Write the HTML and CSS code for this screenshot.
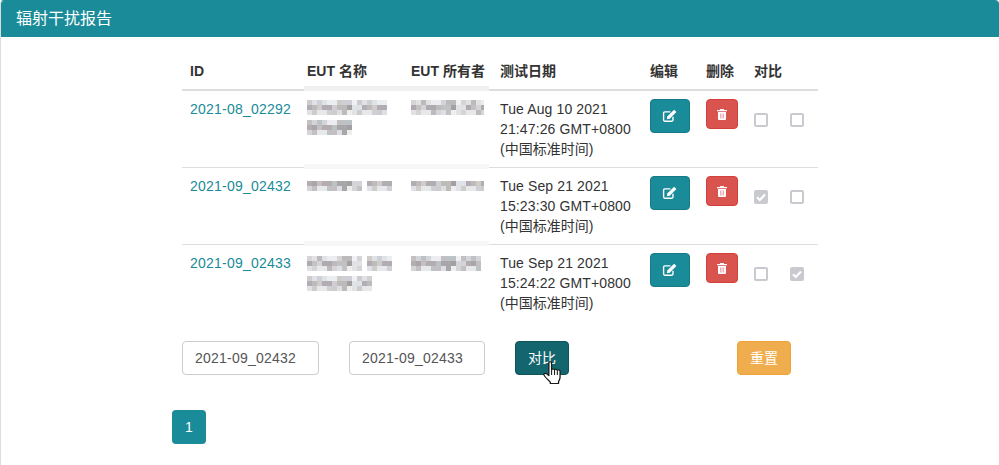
FILE: index.html
```html
<!DOCTYPE html>
<html lang="zh">
<head>
<meta charset="utf-8">
<title>辐射干扰报告</title>
<link rel="stylesheet" href="styles.css">
</head>
<body>
<section class="panel">
  <header class="panel-head">辐射干扰报告</header>
  <div class="panel-body">
    <table class="report">
      <colgroup>
        <col class="c-id"><col class="c-name"><col class="c-owner"><col class="c-date"><col class="c-edit"><col class="c-del"><col class="c-cmp">
      </colgroup>
      <thead>
        <tr><th>ID</th><th class="masked m-name">EUT 名称</th><th class="masked m-owner">EUT 所有者</th><th>测试日期</th><th>编辑</th><th>删除</th><th>对比</th></tr>
      </thead>
      <tbody>
        <tr>
          <td><a href="#">2021-08_02292</a></td>
          <td class="masked m-name"><div class="mosaic-line top-1"><div class="mosaic w80 p1"></div></div><div class="mosaic-line next"><div class="mosaic w45 p2"></div></div></td>
          <td class="masked m-owner"><div class="mosaic-line top-1"><div class="mosaic w75 p3"></div></div></td>
          <td><span class="latin">Tue Aug 10 2021 21:47:26 GMT+0800</span> (中国标准时间)</td>
          <td><button class="btn edit"><svg viewBox="0 0 14 14" width="16" height="16"><path d="M9.600 7.600v3a1 1 0 0 1-1 1H2.400a1 1 0 0 1-1-1V4.400a1 1 0 0 1 1-1h5" fill="none" stroke="#fff" stroke-width="1.200"/><path d="M4.800 7.300 10.600 1.500l2 2-5.800 5.800-2.600.6z" fill="#fff"/></svg></button></td>
          <td><button class="btn del"><svg viewBox="0 0 12 12" width="12" height="12"><path d="M4.300 1h3.400l.5 1H11v1.200H1V2h2.800zM2 4h8v7a1 1 0 0 1-1 1H3a1 1 0 0 1-1-1z" fill="#fff"/><path d="M4.500 5.500v5M6 5.500v5M7.500 5.500v5" stroke="#ee9aa6" stroke-width=".8"/></svg></button></td>
          <td><div class="checks"><span class="check"></span><span class="check"></span></div></td>
        </tr>
        <tr>
          <td><a href="#">2021-09_02432</a></td>
          <td class="masked m-name"><div class="mosaic-line top-2"><div class="mosaic w55 short p2"></div><div class="mosaic w25 short p1"></div></div></td>
          <td class="masked m-owner"><div class="mosaic-line top-2"><div class="mosaic w75 short p1"></div></div></td>
          <td><span class="latin">Tue Sep 21 2021 15:23:30 GMT+0800</span> (中国标准时间)</td>
          <td><button class="btn edit"><svg viewBox="0 0 14 14" width="16" height="16"><path d="M9.600 7.600v3a1 1 0 0 1-1 1H2.400a1 1 0 0 1-1-1V4.400a1 1 0 0 1 1-1h5" fill="none" stroke="#fff" stroke-width="1.200"/><path d="M4.800 7.300 10.600 1.500l2 2-5.800 5.800-2.600.6z" fill="#fff"/></svg></button></td>
          <td><button class="btn del"><svg viewBox="0 0 12 12" width="12" height="12"><path d="M4.300 1h3.400l.5 1H11v1.200H1V2h2.800zM2 4h8v7a1 1 0 0 1-1 1H3a1 1 0 0 1-1-1z" fill="#fff"/><path d="M4.500 5.500v5M6 5.500v5M7.500 5.500v5" stroke="#ee9aa6" stroke-width=".8"/></svg></button></td>
          <td><div class="checks"><span class="check on"><svg viewBox="0 0 14 14" width="14" height="14"><path d="M3 7.200 5.800 10 11 4.500" fill="none" stroke="#fff" stroke-width="2.200"/></svg></span><span class="check"></span></div></td>
        </tr>
        <tr>
          <td><a href="#">2021-09_02433</a></td>
          <td class="masked m-name"><div class="mosaic-line top-3"><div class="mosaic w55 p3"></div><div class="mosaic w25 p1"></div></div><div class="mosaic-line next"><div class="mosaic w65 p1"></div></div></td>
          <td class="masked m-owner"><div class="mosaic-line top-3"><div class="mosaic w70 p2"></div></div></td>
          <td><span class="latin">Tue Sep 21 2021 15:24:22 GMT+0800</span> (中国标准时间)</td>
          <td><button class="btn edit"><svg viewBox="0 0 14 14" width="16" height="16"><path d="M9.600 7.600v3a1 1 0 0 1-1 1H2.400a1 1 0 0 1-1-1V4.400a1 1 0 0 1 1-1h5" fill="none" stroke="#fff" stroke-width="1.200"/><path d="M4.800 7.300 10.600 1.500l2 2-5.800 5.800-2.600.6z" fill="#fff"/></svg></button></td>
          <td><button class="btn del"><svg viewBox="0 0 12 12" width="12" height="12"><path d="M4.300 1h3.400l.5 1H11v1.200H1V2h2.800zM2 4h8v7a1 1 0 0 1-1 1H3a1 1 0 0 1-1-1z" fill="#fff"/><path d="M4.500 5.500v5M6 5.500v5M7.500 5.500v5" stroke="#ee9aa6" stroke-width=".8"/></svg></button></td>
          <td><div class="checks"><span class="check"></span><span class="check on"><svg viewBox="0 0 14 14" width="14" height="14"><path d="M3 7.200 5.800 10 11 4.500" fill="none" stroke="#fff" stroke-width="2.200"/></svg></span></div></td>
        </tr>
      </tbody>
    </table>
    <div class="compare">
      <input class="field first" type="text" value="2021-09_02432">
      <input class="field second" type="text" value="2021-09_02433">
      <div class="hover-wrap">
        <button class="btn action run">对比</button>
        <svg class="cursor" viewBox="0 0 17 25" width="20" height="24" preserveAspectRatio="none"><path d="M5 1.800c0-1.300 2.300-1.300 2.300 0v7.400c.2-1.200 2.400-1.200 2.500.2.200-1 2.300-1 2.400.4.300-.7 2.300-.6 2.300.9v6.300c0 2.400-.8 3.300-1.300 4.700v1.800H6.200v-1.600C4.500 20 1.400 16.500.8 14.500c-.4-1.400 1.100-2.200 2.300-1L5 15.200z" fill="#fff" stroke="#1a1a1a" stroke-width="1.100" stroke-linejoin="round"/><path d="M7.300 9.500v5M9.800 9.500v5M12.200 10.500v4" stroke="#1a1a1a" stroke-width=".9" fill="none"/></svg>
      </div>
      <button class="btn action reset">重置</button>
    </div>
    <nav class="pager"><a class="page" href="#">1</a></nav>
  </div>
</section>
</body>
</html>
```
FILE: styles.css
```css
html, body {
  margin: 0;
  height: 465px;
  overflow: hidden;
  background: #fff;
}
body {
  font-family: "Liberation Sans", "Noto Sans CJK SC", sans-serif;
  font-size: 14px;
  line-height: 20px;
  color: #333;
}
.panel {
  border: 1px solid #ddd;
  border-top-color: #1a8b98;
  border-right: 0;
  border-radius: 4px 4px 0 0;
  height: 500px;
}
.panel-head {
  background: #1a8b98;
  color: #fff;
  font-size: 16px;
  line-height: 18px;
  padding: 9px 15px;
  border-radius: 3px 3px 0 0;
}
.panel-body {
  padding: 16px 0 0 171px;
}
.report {
  margin-left: 10px;
  width: 636px;
  table-layout: fixed;
  border-collapse: collapse;
  border-spacing: 0;
}
.c-id { width: 117px; }
.c-name { width: 104px; }
.c-owner { width: 89px; }
.c-date { width: 150px; }
.c-edit { width: 56px; }
.c-del { width: 48px; }
.c-cmp { width: 72px; }
th {
  text-align: left;
  font-weight: 700;
  padding: 8px;
  border-bottom: 2px solid #ddd;
  white-space: nowrap;
  color: #333;
}
td {
  padding: 8px;
  vertical-align: top;
  border-top: 1px solid #ddd;
  color: #333;
}
thead + tbody tr:first-child td { border-top: 0; }
.masked { position: relative; }
.masked::after {
  content: "";
  position: absolute;
  bottom: -2px;
  height: 5px;
  background: #f7f7f7;
}
.m-name::after { left: 5px; right: 0; }
.m-owner::after { left: 0; right: 3px; }
th.masked::after { background: #f0f0f0; }
tbody tr:last-child td.masked::after { display: none; }
a { color: #1a8b98; text-decoration: none; letter-spacing: .22px; }
.latin { letter-spacing: .12px; }
.mosaic-line { display: flex; gap: 5px; }
.top-1 { margin-top: 1px; }
.top-2 { margin-top: 5px; }
.top-3 { margin-top: 3px; }
.next { margin-top: 5px; }
.mosaic {
  height: 15px;
  background:
    repeating-linear-gradient(90deg, var(--a) 0 5px, var(--c) 5px 10px, var(--e) 10px 15px, var(--c) 15px 20px, #ecedf0 20px 30px, var(--a) 30px 35px, var(--e) 35px 45px, #f0f1f4 45px 50px) 0 0 / 100% 5px no-repeat,
    repeating-linear-gradient(90deg, var(--b) 0 5px, var(--d) 5px 10px, var(--a) 10px 15px, var(--b) 15px 25px, var(--e) 25px 30px, var(--d) 30px 40px, #a3a0a3 40px 45px, var(--c) 45px 55px) 0 5px / 100% 5px no-repeat,
    repeating-linear-gradient(90deg, var(--c) 0 5px, var(--a) 5px 10px, #e6e8ea 10px 20px, var(--e) 20px 25px, var(--a) 25px 30px, #dcdfe4 30px 35px, var(--d) 35px 40px, #eeeeee 40px 45px) 0 10px / 100% 5px no-repeat;
}
.short { height: 10px; background-position: 0 -5px, 0 0, 0 5px; }
.p1 { --a:#d0cccc; --b:#b2adb3; --c:#dfe3e7; --d:#bebcba; --e:#cfd0d5; }
.p2 { --a:#c4bfc0; --b:#b3adb0; --c:#d3d5d8; --d:#a8a6a8; --e:#bdc2c6; }
.p3 { --a:#d6d4d6; --b:#aeaab0; --c:#e2e2e4; --d:#c2c2c2; --e:#bcbabb; }
.w25 { width: 25px; }
.w45 { width: 45px; }
.w55 { width: 55px; }
.w65 { width: 65px; }
.w70 { width: 70px; }
.w75 { width: 75px; }
.w80 { width: 80px; }
.btn {
  display: inline-flex;
  align-items: center;
  justify-content: center;
  padding: 0;
  border: 1px solid transparent;
  border-radius: 4px;
  color: #fff;
  font: inherit;
  vertical-align: top;
}
.edit {
  width: 40px;
  height: 34px;
  background: #1a8b98;
  border-color: #167a86;
}
.del {
  width: 32px;
  height: 30px;
  background: #d9534f;
  border-color: #d43f3a;
}
.checks {
  display: flex;
  gap: 22px;
  padding-top: 14px;
}
.check {
  box-sizing: border-box;
  display: block;
  width: 14px;
  height: 14px;
  border: 2px solid #c9c9d0;
  border-radius: 2px;
}
.check.on { background: #c9c9d0; }
.check svg { display: block; margin: -2px; }
.compare {
  display: flex;
  align-items: flex-start;
  margin: 20px 0 0 10px;
}
.field {
  box-sizing: border-box;
  height: 34px;
  padding: 6px 12px;
  border: 1px solid #ccc;
  border-radius: 4px;
  font: inherit;
  letter-spacing: .22px;
  color: #555;
  background: #fff;
  outline: 0;
}
.first { width: 137px; }
.second { width: 136px; margin-left: 30px; }
.hover-wrap { position: relative; margin-left: 30px; }
.action {
  width: 54px;
  height: 34px;
}
.run { background: #14666e; border-color: #0f545b; }
.reset { background: #f0ad4e; border-color: #eea236; margin-left: 168px; }
.cursor {
  position: absolute;
  left: 28px;
  top: 20px;
}
.pager {
  display: flex;
  margin-top: 35px;
}
.page {
  width: 34px;
  height: 34px;
  box-sizing: border-box;
  display: flex;
  align-items: center;
  justify-content: center;
  background: #1a8b98;
  color: #fff;
  border-radius: 4px;
  letter-spacing: 0;
}
```
